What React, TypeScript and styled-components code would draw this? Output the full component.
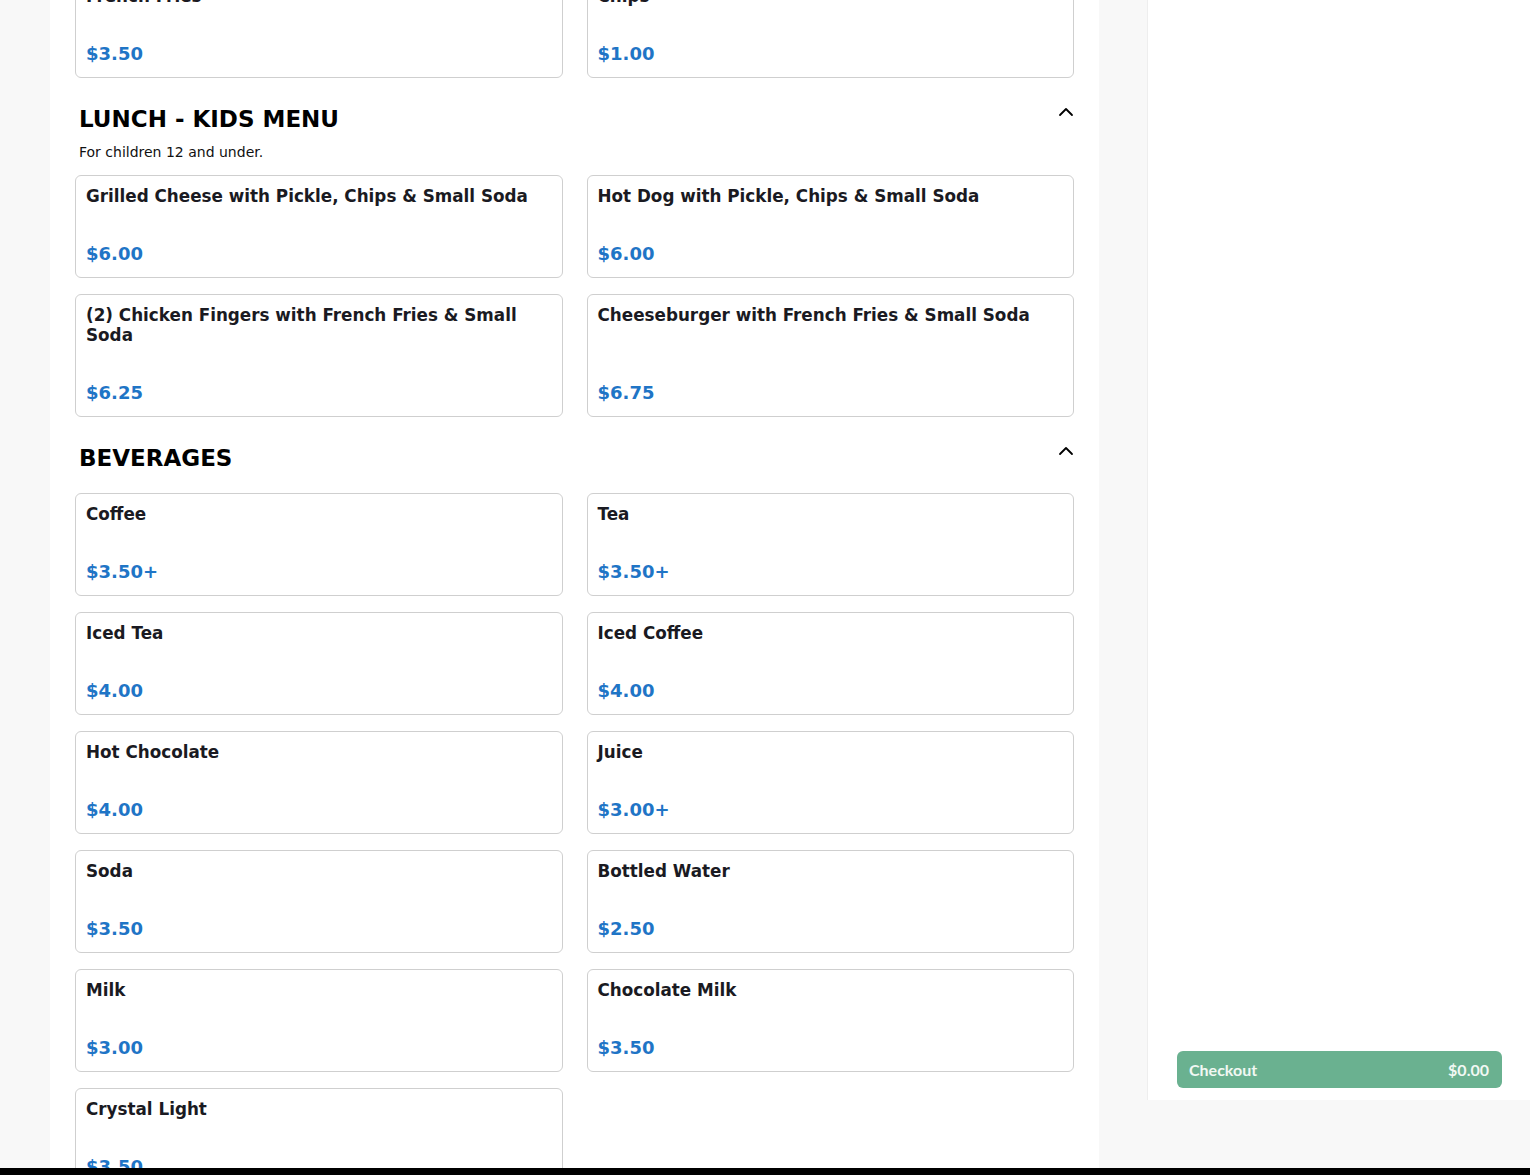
import React, { useLayoutEffect, useRef } from "react";
import styled, { createGlobalStyle } from "styled-components";
import { ChevronUp } from "lucide-react";

interface MenuItem {
  name: string;
  price: string;
}

interface MenuSection {
  title?: string;
  description?: string;
  items: MenuItem[];
}

const sections: MenuSection[] = [
  {
    items: [
      { name: "French Fries", price: "$3.50" },
      { name: "Chips", price: "$1.00" },
    ],
  },
  {
    title: "LUNCH - KIDS MENU",
    description: "For children 12 and under.",
    items: [
      { name: "Grilled Cheese with Pickle, Chips & Small Soda", price: "$6.00" },
      { name: "Hot Dog with Pickle, Chips & Small Soda", price: "$6.00" },
      { name: "(2) Chicken Fingers with French Fries & Small Soda", price: "$6.25" },
      { name: "Cheeseburger with French Fries & Small Soda", price: "$6.75" },
    ],
  },
  {
    title: "BEVERAGES",
    items: [
      { name: "Coffee", price: "$3.50+" },
      { name: "Tea", price: "$3.50+" },
      { name: "Iced Tea", price: "$4.00" },
      { name: "Iced Coffee", price: "$4.00" },
      { name: "Hot Chocolate", price: "$4.00" },
      { name: "Juice", price: "$3.00+" },
      { name: "Soda", price: "$3.50" },
      { name: "Bottled Water", price: "$2.50" },
      { name: "Milk", price: "$3.00" },
      { name: "Chocolate Milk", price: "$3.50" },
      { name: "Crystal Light", price: "$3.50" },
    ],
  },
];

const App: React.FC = () => {
  const menuRef = useRef<HTMLDivElement>(null);

  useLayoutEffect(() => {
    // page is shown scrolled down to the kids menu
    if (menuRef.current) menuRef.current.scrollTop = 50;
  }, []);

  return (
    <>
      <GlobalStyle />
      <Page>
        <Layout>
          <Menu ref={menuRef}>
            {sections.map((section, i) => (
              <Section key={i}>
                {section.title && (
                  <SectionHeader>
                    <HeaderText>
                      <SectionTitle>{section.title}</SectionTitle>
                      {section.description && <SectionDesc>{section.description}</SectionDesc>}
                    </HeaderText>
                    <CollapseButton aria-label="collapse">
                      <ChevronUp size={24} strokeWidth={1.8} />
                    </CollapseButton>
                  </SectionHeader>
                )}
                <CardGrid>
                  {section.items.map((item) => (
                    <ItemCard key={item.name}>
                      <ItemName>{item.name}</ItemName>
                      <ItemPrice>{item.price}</ItemPrice>
                    </ItemCard>
                  ))}
                </CardGrid>
              </Section>
            ))}
          </Menu>
          <Sidebar>
            <CheckoutButton>
              <span>Checkout</span>
              <span>$0.00</span>
            </CheckoutButton>
          </Sidebar>
        </Layout>
        <BottomBar />
      </Page>
    </>
  );
};

export default App;

const GlobalStyle = createGlobalStyle`
  html, body {
    margin: 0;
    padding: 0;
    background: #f8f8f8;
    font-family: "DejaVu Sans", "Noto Sans", sans-serif;
    overflow: hidden;
  }
`;

const Page = styled.div`
  display: flex;
  flex-direction: column;
  height: 1175px;
`;

const Layout = styled.div`
  display: flex;
  align-items: flex-start;
  height: 1168px;
  padding-left: 50px;
  gap: 48px;
`;

const Menu = styled.div`
  width: 1049px;
  height: 100%;
  overflow: hidden;
  background: #fff;
  box-sizing: border-box;
  padding: 25px 25px 40px;
`;

const Section = styled.section`
  & + & {
    padding-top: 28px;
  }
`;

const SectionHeader = styled.div`
  display: flex;
  justify-content: space-between;
  align-items: flex-start;
  padding: 0 0 13px 4px;
`;

const HeaderText = styled.div`
  display: flex;
  flex-direction: column;
`;

const SectionTitle = styled.h2`
  margin: 0 0 8px;
  font-size: 23px;
  line-height: 27px;
  font-weight: 700;
  color: #000;
`;

const SectionDesc = styled.p`
  margin: 1px 0 0;
  font-size: 14px;
  line-height: 20px;
  color: #111;
`;

const CollapseButton = styled.button`
  display: flex;
  margin: -6px -4px 0 0;
  padding: 0;
  border: none;
  background: none;
  color: #000;
  cursor: pointer;
`;

const CardGrid = styled.div`
  display: grid;
  grid-template-columns: 1fr 1fr;
  column-gap: 24px;
  row-gap: 16px;
`;

const ItemCard = styled.div`
  display: flex;
  flex-direction: column;
  padding: 10px 10px 11px;
  border: 1px solid #cfcfcf;
  border-radius: 6px;
  background: #fff;
`;

const ItemName = styled.div`
  margin-bottom: 36px;
  font-size: 16.8px;
  line-height: 20px;
  font-weight: 700;
  color: #1a1a22;
`;

const ItemPrice = styled.div`
  margin-top: auto;
  font-size: 18px;
  line-height: 24px;
  font-weight: 700;
  color: #1f75c6;
`;

const Sidebar = styled.aside`
  width: 383px;
  height: 1100px;
  box-sizing: border-box;
  display: flex;
  flex-direction: column;
  justify-content: flex-end;
  padding: 0 28px 12px 29px;
  background: #fff;
  border-left: 1px solid #eeeeee;
`;

const CheckoutButton = styled.button`
  display: flex;
  justify-content: space-between;
  align-items: center;
  height: 37px;
  padding: 0 13px 0 12px;
  border: none;
  border-radius: 6px;
  background: #6ab190;
  color: #f1f8f3;
  font-family: "Lato", "Open Sans", sans-serif;
  font-size: 16px;
  font-weight: 700;
  cursor: pointer;
`;

const BottomBar = styled.div`
  height: 7px;
  background: #000;
`;
